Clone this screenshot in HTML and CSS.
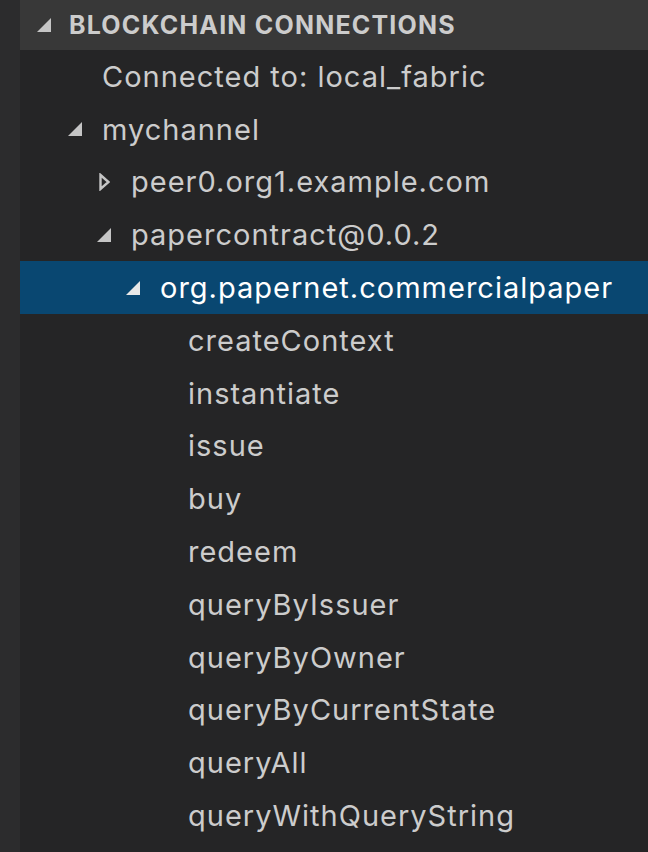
FILE: index.html
```html
<!DOCTYPE html>
<html>
<head>
<meta charset="utf-8">
<link rel="stylesheet" href="styles.css">
</head>
<body>
<div class="app">
  <div class="strip"></div>
  <div class="panel">
    <div class="header">
      <span class="twistie"><svg width="14" height="14" viewBox="0 0 14 14"><polygon points="14,0 14,14 0,14" fill="#c5c5c5"/></svg></span>
      <span class="title">BLOCKCHAIN CONNECTIONS</span>
    </div>
    <div class="tree">
      <div class="row l0"><span class="twistie"></span><span class="label">Connected to: local_fabric</span></div>
      <div class="row l0"><span class="twistie"><svg width="14" height="14" viewBox="0 0 14 14"><polygon points="14,0 14,14 0,14" fill="#c5c5c5"/></svg></span><span class="label">mychannel</span></div>
      <div class="row l1"><span class="twistie"><svg class="closed" width="11" height="18" viewBox="0 0 11 18"><polygon points="1.5,2 9.5,9 1.5,16" fill="none" stroke="#c5c5c5" stroke-width="2.4" stroke-linejoin="miter"/></svg></span><span class="label">peer0.org1.example.com</span></div>
      <div class="row l1"><span class="twistie"><svg width="14" height="14" viewBox="0 0 14 14"><polygon points="14,0 14,14 0,14" fill="#c5c5c5"/></svg></span><span class="label">papercontract@0.0.2</span></div>
      <div class="row l2 selected"><span class="twistie"><svg width="14" height="14" viewBox="0 0 14 14"><polygon points="14,0 14,14 0,14" fill="#e8e8e8"/></svg></span><span class="label">org.papernet.commercialpaper</span></div>
      <div class="row l3"><span class="twistie"></span><span class="label">createContext</span></div>
      <div class="row l3"><span class="twistie"></span><span class="label">instantiate</span></div>
      <div class="row l3"><span class="twistie"></span><span class="label">issue</span></div>
      <div class="row l3"><span class="twistie"></span><span class="label">buy</span></div>
      <div class="row l3"><span class="twistie"></span><span class="label">redeem</span></div>
      <div class="row l3"><span class="twistie"></span><span class="label">queryByIssuer</span></div>
      <div class="row l3"><span class="twistie"></span><span class="label">queryByOwner</span></div>
      <div class="row l3"><span class="twistie"></span><span class="label">queryByCurrentState</span></div>
      <div class="row l3"><span class="twistie"></span><span class="label">queryAll</span></div>
      <div class="row l3"><span class="twistie"></span><span class="label">queryWithQueryString</span></div>
    </div>
  </div>
</div>
</body>
</html>
```
FILE: styles.css
```css
html, body {
  margin: 0;
  padding: 0;
  background: #252526;
}
.app {
  display: flex;
  width: 648px;
  height: 852px;
  overflow: hidden;
  font-family: Inter, "Liberation Sans", Arial, sans-serif;
}
.strip {
  width: 20px;
  flex: none;
  background: #2c2c2d;
}
.panel {
  flex: 1;
  background: #252526;
  display: flex;
  flex-direction: column;
}
.header {
  height: 50px;
  flex: none;
  background: #383838;
  display: flex;
  align-items: center;
  padding-left: 17px;
  color: #cccccc;
}
.header .twistie {
  width: 32px;
}
.header .title {
  font-weight: bold;
  font-size: 25px;
  letter-spacing: 1.2px;
}
.twistie {
  width: 33px;
  flex: none;
  display: flex;
  align-items: center;
}
.twistie svg {
  display: block;
}
.twistie svg.closed {
  margin-left: 2px;
}
.row {
  height: 52.8px;
  display: flex;
  align-items: center;
  color: #cccccc;
  font-size: 29px;
  letter-spacing: 1px;
  white-space: nowrap;
}
.l0 { padding-left: 48px; }
.l1 { padding-left: 77px; }
.l2 { padding-left: 106px; }
.l3 { padding-left: 135px; }
.l0 .twistie, .l1 .twistie, .l2 .twistie { width: 34px; }
.selected {
  background: #094771;
  color: #ffffff;
}
```
